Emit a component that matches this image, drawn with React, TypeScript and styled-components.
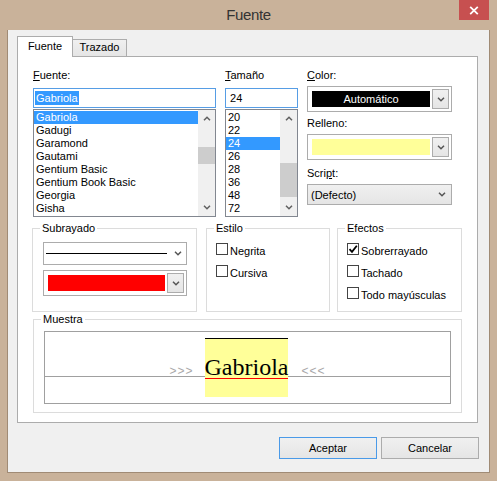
import React from "react";
import styled, { createGlobalStyle } from "styled-components";

const Global = createGlobalStyle`
  html, body { margin: 0; padding: 0; }
  body {
    font-family: "Liberation Sans", Arial, sans-serif;
    font-size: 11px;
    color: #000;
    background: #c9b29a;
  }
  * { box-sizing: border-box; }
`;

const Window = styled.div`
  width: 497px;
  height: 481px;
  background: #c9b29a;
  display: flex;
  flex-direction: column;
`;

const TitleBar = styled.div`
  height: 30px;
  flex: none;
  display: grid;
  grid-template-columns: 1fr auto 1fr;
`;

const Title = styled.div`
  grid-column: 2;
  font-size: 15px;
  line-height: 30px;
  color: #333;
  letter-spacing: -0.4px;
`;

const CloseButton = styled.div`
  grid-column: 3;
  justify-self: end;
  align-self: start;
  width: 30px;
  height: 20px;
  margin-right: 8px;
  background: #c75050;
  display: flex;
  align-items: center;
  justify-content: center;
`;

const Client = styled.div`
  flex: 1;
  margin: 0 7px 8px;
  border: 1px solid #a08b75;
  border-top: none;
  background: #f0f0f0;
  padding: 6px 11px 0 9px;
  display: flex;
  flex-direction: column;
`;

const TabStrip = styled.div`
  display: flex;
  align-items: flex-end;
  height: 21px;
  margin-bottom: -1px;
`;

const Tab = styled.div<{ $active?: boolean }>`
  border: 1px solid #acacac;
  border-bottom: none;
  line-height: 14px;
  text-align: center;
  ${(p) =>
    p.$active
      ? `
    width: 56px;
    height: 21px;
    padding-top: 2px;
    background: #fff;
    position: relative;
  `
      : `
    width: 54px;
    height: 17px;
    margin-bottom: 1px;
    border-left: none;
    background: linear-gradient(#f0f0f0, #e5e5e5);
  `}
`;

const Panel = styled.div`
  height: 367px;
  border: 1px solid #acacac;
  background: #fff;
  padding: 11px 15px 0 14px;
  display: flex;
  flex-direction: column;
`;

const TopRow = styled.div`
  display: flex;
  gap: 9px;
  padding-left: 1px;
`;

const Column = styled.div<{ $w: number }>`
  width: ${(p) => p.$w}px;
  display: flex;
  flex-direction: column;
`;

const FieldLabel = styled.div<{ $gap?: number; $top?: number }>`
  height: 14px;
  line-height: 14px;
  margin-bottom: ${(p) => p.$gap ?? 0}px;
  margin-top: ${(p) => p.$top ?? 0}px;
`;

const Accel = styled.span`
  text-decoration: underline;
`;

const TextBox = styled.div`
  height: 20px;
  border: 1px solid #569de5;
  padding: 0 1px;
  display: flex;
  align-items: center;
  line-height: 14px;
`;

const Selection = styled.span`
  background: #3399ff;
  color: #fff;
  padding: 0 1px;
`;

const ListBox = styled.div`
  margin-top: 1px;
  height: 108px;
  border: 1px solid #828790;
  display: flex;
`;

const ListItems = styled.div`
  flex: 1;
  padding-top: 1px;
  overflow: hidden;
`;

const ListItem = styled.div<{ $selected?: boolean }>`
  height: 13px;
  line-height: 13px;
  padding-left: 2px;
  white-space: nowrap;
  background: ${(p) => (p.$selected ? "#3399ff" : "transparent")};
  color: ${(p) => (p.$selected ? "#fff" : "#000")};
`;

const ScrollBar = styled.div`
  width: 17px;
  flex: none;
  background: #f0f0f0;
  display: flex;
  flex-direction: column;
`;

const ScrollArrow = styled.div`
  height: 17px;
  flex: none;
  display: flex;
  align-items: center;
  justify-content: center;
`;

const Track = styled.div`
  flex: 1;
`;

const Thumb = styled.div<{ $offset: number; $size: number }>`
  margin-top: ${(p) => p.$offset}px;
  height: ${(p) => p.$size}px;
  background: #cdcdcd;
`;

const ColorCombo = styled.div`
  height: 26px;
  border: 1px solid #acacac;
  background: #fff;
  display: flex;
  align-items: center;
  padding: 0 2px 0 4px;
`;

const Swatch = styled.div<{ $color: string }>`
  flex: 1;
  height: 16px;
  background: ${(p) => p.$color};
  color: #fff;
  line-height: 16px;
  text-align: center;
`;

const DropButton = styled.div`
  width: 17px;
  height: 20px;
  flex: none;
  margin-left: 2px;
  border: 1px solid #acacac;
  background: linear-gradient(#f0f0f0, #e5e5e5);
  display: flex;
  align-items: center;
  justify-content: center;
`;

const SelectBox = styled.div`
  height: 21px;
  border: 1px solid #acacac;
  background: linear-gradient(#f0f0f0, #e5e5e5);
  display: flex;
  align-items: center;
  justify-content: space-between;
  padding: 0 5px 0 3px;
  line-height: 14px;
`;

const GroupsRow = styled.div`
  display: flex;
  margin-top: 4px;
`;

const Group = styled.fieldset<{ $w: number; $h: number; $mr?: number; $ml?: number }>`
  margin: 0 ${(p) => p.$mr ?? 0}px 0 ${(p) => p.$ml ?? 0}px;
  padding: 0;
  border: 1px solid #dcdcdc;
  width: ${(p) => p.$w}px;
  height: ${(p) => p.$h}px;
  min-width: 0;
`;

const GroupLegend = styled.legend`
  margin-left: 7px;
  padding: 0 2px;
  line-height: 14px;
  font-size: 11px;
`;

const ComboStack = styled.div`
  padding: 7px 9px 0 10px;
  display: flex;
  flex-direction: column;
  gap: 5px;
`;

const LineCombo = styled.div`
  height: 23px;
  border: 1px solid #acacac;
  background: #fff;
  display: flex;
  align-items: center;
  padding: 0 4px 0 2px;
  justify-content: space-between;
`;

const LineSample = styled.div`
  width: 121px;
  height: 1px;
  background: #000;
`;

const CheckList = styled.div`
  padding: 8px 9px 0;
  display: flex;
  flex-direction: column;
  gap: 7px;
`;

const CheckRow = styled.div`
  display: flex;
  align-items: flex-start;
  gap: 2px;
`;

const CheckBox = styled.div`
  width: 12px;
  height: 12px;
  flex: none;
  border: 1px solid #444;
  background: #fff;
  display: flex;
  align-items: center;
  justify-content: center;
`;

const CheckLabel = styled.span`
  padding-top: 1px;
  line-height: 14px;
  white-space: nowrap;
`;

const PreviewWrap = styled.div`
  padding: 5px 10px 0 10px;
`;

const Preview = styled.div`
  height: 73px;
  border: 1px solid #a0a0a0;
  background: linear-gradient(#a0a0a0, #a0a0a0) 0 44px / 100% 1px no-repeat, #fff;
  display: flex;
  justify-content: center;
  align-items: baseline;
  padding-top: 6px;
`;

const Arrows = styled.span<{ $side: "left" | "right" }>`
  color: #a8a8a8;
  font-size: 12px;
  letter-spacing: 1px;
  margin-right: ${(p) => (p.$side === "left" ? 11 : 0)}px;
  margin-left: ${(p) => (p.$side === "right" ? 13 : 0)}px;
`;

const SampleText = styled.span`
  font-family: "Liberation Serif", "Times New Roman", serif;
  font-size: 24px;
  line-height: 59px;
  height: 59px;
  display: inline-block;
  background:
    linear-gradient(#000, #000) 0 0 / 100% 1px no-repeat,
    linear-gradient(#f00, #f00) 0 40px / 100% 1px no-repeat,
    #ffff99;
`;

const ButtonRow = styled.div`
  display: flex;
  justify-content: flex-end;
  gap: 4px;
  margin-top: 14px;
  margin-right: -1px;
`;

const DialogButton = styled.div<{ $default?: boolean }>`
  width: 98px;
  height: 22px;
  border: 1px solid ${(p) => (p.$default ? "#4a9ae8" : "#acacac")};
  background: linear-gradient(#f0f0f0, #e5e5e5);
  line-height: 20px;
  text-align: center;
`;

const Chevron = ({ dir = "down", color = "#555" }: { dir?: "up" | "down"; color?: string }) => (
  <svg width="8" height="5" viewBox="0 0 8 5">
    <path
      d={dir === "up" ? "M1 4.2 L4 1.2 L7 4.2" : "M1 0.8 L4 3.8 L7 0.8"}
      stroke={color}
      strokeWidth="1.5"
      fill="none"
    />
  </svg>
);

const Check = () => (
  <svg width="10" height="10" viewBox="0 0 10 10">
    <path d="M1.5 5.2 L4 7.8 L8.8 1.8" stroke="#000" strokeWidth="1.8" fill="none" />
  </svg>
);

type ListProps = { items: string[]; selected: number; thumbOffset: number; thumbSize: number };

const ScrollList = ({ items, selected, thumbOffset, thumbSize }: ListProps) => (
  <ListBox>
    <ListItems>
      {items.map((it, i) => (
        <ListItem key={it} $selected={i === selected}>
          {it}
        </ListItem>
      ))}
    </ListItems>
    <ScrollBar>
      <ScrollArrow>
        <Chevron dir="up" color="#606060" />
      </ScrollArrow>
      <Track>
        <Thumb $offset={thumbOffset} $size={thumbSize} />
      </Track>
      <ScrollArrow>
        <Chevron dir="down" color="#606060" />
      </ScrollArrow>
    </ScrollBar>
  </ListBox>
);

const fonts = ["Gabriola", "Gadugi", "Garamond", "Gautami", "Gentium Basic", "Gentium Book Basic", "Georgia", "Gisha"];
const sizes = ["20", "22", "24", "26", "28", "36", "48", "72"];

const Checkbox = ({ label, checked }: { label: string; checked?: boolean }) => (
  <CheckRow>
    <CheckBox>{checked && <Check />}</CheckBox>
    <CheckLabel>{label}</CheckLabel>
  </CheckRow>
);

const SwatchCombo = ({ color, text }: { color: string; text?: string }) => (
  <ColorCombo>
    <Swatch $color={color}>{text}</Swatch>
    <DropButton>
      <Chevron />
    </DropButton>
  </ColorCombo>
);

export default function App() {
  return (
    <>
      <Global />
      <Window>
        <TitleBar>
          <Title>Fuente</Title>
          <CloseButton>
            <svg width="10" height="9" viewBox="0 0 10 9">
              <path d="M1.2 0.8 L8.8 8.2 M8.8 0.8 L1.2 8.2" stroke="#fff" strokeWidth="1.8" />
            </svg>
          </CloseButton>
        </TitleBar>
        <Client>
          <TabStrip>
            <Tab $active>Fuente</Tab>
            <Tab>Trazado</Tab>
          </TabStrip>
          <Panel>
            <TopRow>
              <Column $w={183}>
                <FieldLabel $gap={6}>
                  <Accel>F</Accel>uente:
                </FieldLabel>
                <TextBox>
                  <Selection>Gabriola</Selection>
                </TextBox>
                <ScrollList items={fonts} selected={0} thumbOffset={20} thumbSize={17} />
              </Column>
              <Column $w={73}>
                <FieldLabel $gap={6}>
                  <Accel>T</Accel>amaño
                </FieldLabel>
                <TextBox>&nbsp;24</TextBox>
                <ScrollList items={sizes} selected={2} thumbOffset={36} thumbSize={34} />
              </Column>
              <Column $w={145}>
                <FieldLabel $gap={4}>
                  <Accel>C</Accel>olor:
                </FieldLabel>
                <SwatchCombo color="#000" text="Automático" />
                <FieldLabel $top={4} $gap={4}>
                  Relleno:
                </FieldLabel>
                <SwatchCombo color="#ffff99" />
                <FieldLabel $top={6} $gap={4}>
                  Scri<Accel>p</Accel>t:
                </FieldLabel>
                <SelectBox>
                  <span>(Defecto)</span>
                  <Chevron />
                </SelectBox>
              </Column>
            </TopRow>
            <GroupsRow>
              <Group $w={165} $h={91} $mr={9}>
                <GroupLegend>Subrayado</GroupLegend>
                <ComboStack>
                  <LineCombo>
                    <LineSample />
                    <Chevron />
                  </LineCombo>
                  <SwatchCombo color="#ff0000" />
                </ComboStack>
              </Group>
              <Group $w={124} $h={91} $mr={7}>
                <GroupLegend>Estilo</GroupLegend>
                <CheckList>
                  <Checkbox label="Negrita" />
                  <Checkbox label="Cursiva" />
                </CheckList>
              </Group>
              <Group $w={125} $h={91}>
                <GroupLegend>Efectos</GroupLegend>
                <CheckList>
                  <Checkbox label="Sobrerrayado" checked />
                  <Checkbox label="Tachado" />
                  <Checkbox label="Todo mayúsculas" />
                </CheckList>
              </Group>
            </GroupsRow>
            <Group $w={429} $h={101} $ml={1}>
              <GroupLegend>Muestra</GroupLegend>
              <PreviewWrap>
                <Preview>
                  <Arrows $side="left">&gt;&gt;&gt;</Arrows>
                  <SampleText>Gabriola</SampleText>
                  <Arrows $side="right">&lt;&lt;&lt;</Arrows>
                </Preview>
              </PreviewWrap>
            </Group>
          </Panel>
          <ButtonRow>
            <DialogButton $default>Aceptar</DialogButton>
            <DialogButton>Cancelar</DialogButton>
          </ButtonRow>
        </Client>
      </Window>
    </>
  );
}
